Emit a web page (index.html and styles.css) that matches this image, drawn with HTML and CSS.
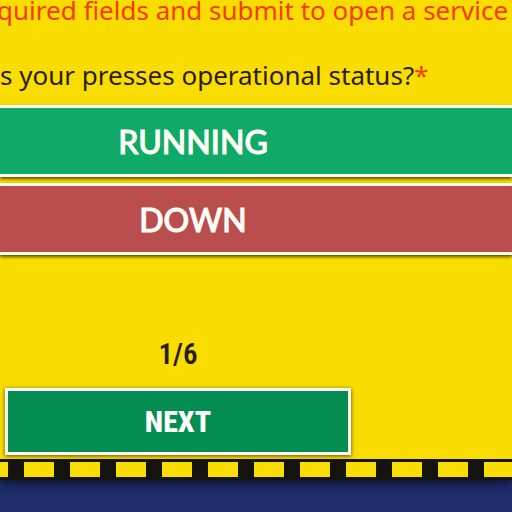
FILE: index.html
```html
<!DOCTYPE html>
<html lang="en">
<head>
<meta charset="utf-8">
<title>Service request</title>
<link rel="stylesheet" href="styles.css">
</head>
<body>
<main class="sheet">
  <form class="form">
    <p class="notice">quired fields and submit to open a service</p>
    <fieldset class="question">
      <legend class="prompt">s your presses operational status?<span class="required">*</span></legend>
      <div class="options">
        <button class="option running" type="button"><span class="label">RUNNING</span></button>
        <button class="option down" type="button"><span class="label">DOWN</span></button>
      </div>
    </fieldset>
    <div class="pager">
      <p class="step">1/6</p>
      <button class="next" type="button">NEXT</button>
    </div>
  </form>
  <div class="tape"></div>
</main>
</body>
</html>
```

FILE: styles.css
```css
* {
  box-sizing: border-box;
}

body {
  margin: 0;
  min-height: 100vh;
  overflow: hidden;
  background: #202e6e;
  font-family: "Noto Sans", sans-serif;
}

.sheet {
  background: #fadd00;
  box-shadow: 0 4px 10px #10142c;
}

.notice {
  margin: 0 0 0 -3px;
  height: 60px;
  font-size: 26px;
  line-height: 20px;
  white-space: nowrap;
  color: #f53b00;
}

.question {
  margin: 0;
  padding: 0;
  border: 0;
  min-width: 0;
}

.prompt {
  padding: 0;
  height: 45px;
  font-size: 26px;
  line-height: 30px;
  white-space: nowrap;
  color: #2b1e08;
}

.required {
  color: #f53b00;
}

.options {
  display: grid;
  gap: 6px;
}

.option {
  display: block;
  height: 72px;
  padding: 0;
  border: solid #fffdf0;
  border-width: 3px 0;
  box-shadow: 0 2px 3px rgba(50, 40, 0, 0.8);
  font-family: "Lato Medium", Lato, sans-serif;
  font-size: 32px;
  font-weight: 500;
  -webkit-text-stroke: 1px #fffdf5;
  color: #fffdf5;
  text-align: left;
}

.label {
  display: block;
  width: 386px;
  text-align: center;
}

.running {
  background: #0fa968;
}

.down {
  background: #ba4e4e;
}

.pager {
  width: 356px;
  padding: 83px 5px 4px;
  text-align: center;
}

.step {
  margin: 0 0 18px;
  font-family: "Roboto Condensed", "Liberation Sans Narrow", Roboto, sans-serif;
  font-size: 29px;
  font-weight: 600;
  line-height: 32px;
  color: #2b1e08;
}

.next {
  width: 100%;
  height: 67px;
  display: block;
  padding: 0;
  border: 3px solid #fffdf5;
  background: #048d51;
  box-shadow: 0 1px 4px rgba(50, 40, 0, 0.8);
  font-family: "Roboto Condensed", "Liberation Sans Narrow", Roboto, sans-serif;
  font-size: 30px;
  font-weight: 800;
  color: #ffffff;
}

.tape {
  height: 21px;
  border: solid #14130e;
  border-width: 3px 0;
  background: repeating-linear-gradient(90deg, #fadd00 0 30px, #14130e 30px 46px) -22px 0 / 200% 100%;
}
```
